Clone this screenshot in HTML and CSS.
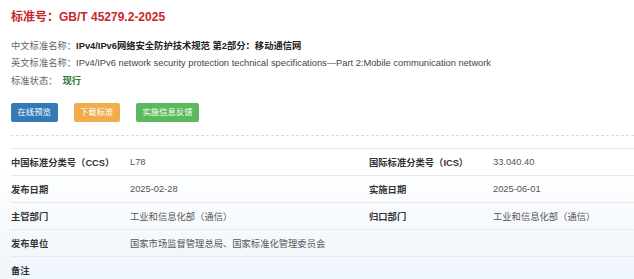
FILE: index.html
```html
<!DOCTYPE html>
<html lang="zh-CN">
<head>
  <meta charset="UTF-8" />
  <title>GB/T 45279.2-2025</title>
  <link rel="stylesheet" href="styles.css">
</head>
<body>

  <div class="detail">
    <h1 class="std-title">标准号：GB/T 45279.2-2025</h1>

    <div class="info">
      <p><span class="info-label">中文标准名称：</span><strong>IPv4/IPv6网络安全防护技术规范 第2部分：移动通信网</strong></p>
      <p><span class="info-label">英文标准名称：</span><span class="en-name">IPv4/IPv6 network security protection technical specifications—Part 2:Mobile communication network</span></p>
      <p class="status-line"><span class="info-label">标准状态：</span><span class="status">现行</span></p>
    </div>

    <div class="actions">
      <button class="btn btn-blue">在线预览</button>
      <button class="btn btn-orange">下载标准</button>
      <button class="btn btn-green">实施信息反馈</button>
    </div>

    <div class="divider"></div>

    <div class="meta">
      <div class="meta-row">
        <div class="meta-key">中国标准分类号（CCS）</div>
        <div class="meta-val">L78</div>
        <div class="meta-key">国际标准分类号（ICS）</div>
        <div class="meta-val">33.040.40</div>
      </div>
      <div class="meta-row">
        <div class="meta-key">发布日期</div>
        <div class="meta-val">2025-02-28</div>
        <div class="meta-key">实施日期</div>
        <div class="meta-val">2025-06-01</div>
      </div>
      <div class="meta-row">
        <div class="meta-key">主管部门</div>
        <div class="meta-val">工业和信息化部（通信）</div>
        <div class="meta-key">归口部门</div>
        <div class="meta-val">工业和信息化部（通信）</div>
      </div>
      <div class="meta-row">
        <div class="meta-key">发布单位</div>
        <div class="meta-val wide">国家市场监督管理总局、国家标准化管理委员会</div>
      </div>
      <div class="meta-row">
        <div class="meta-key">备注</div>
        <div class="meta-val wide"></div>
      </div>
    </div>
  </div>

</body>
</html>
```

FILE: styles.css
```css
html {
  height: 100%;
}

body {
  margin: 0;
  min-height: 100%;
  font-family: "Liberation Sans", "Noto Sans CJK SC", sans-serif;
  font-size: 9.3px;
  color: #555;
  background: linear-gradient(to bottom, #fff 0, #fff 165px, #eef5fb 279px);
}

.detail {
  padding-left: 11px;
  overflow: hidden;
}

.std-title {
  margin: 7px 0 0;
  font-size: 12px;
  line-height: 20px;
  font-weight: bold;
  color: #c9282d;
}

.info {
  margin-top: 11px;
}

.info p {
  margin: 0;
  line-height: 17px;
  white-space: nowrap;
}

.info .status-line {
  margin-top: 1px;
}

.info-label {
  color: #666;
}

.info strong {
  color: #222;
}

.en-name {
  color: #444;
}

.status {
  margin-left: 5px;
  color: #2f7d32;
  font-weight: bold;
}

.actions {
  display: flex;
  gap: 16px;
  margin-top: 13px;
}

.btn {
  height: 19px;
  padding: 0 6.5px;
  border: 0;
  border-radius: 2px;
  color: #fff;
  font-family: inherit;
  font-size: 8.4px;
  line-height: 19px;
}

.btn-blue {
  background: #337ab7;
}

.btn-orange {
  background: #f0ad4e;
}

.btn-green {
  background: #5cb85c;
}

.divider {
  margin-top: 13px;
  border-top: 1px dashed #ddd;
}

.meta {
  margin-top: 12px;
}

.meta-row {
  display: grid;
  grid-template-columns: 119px 239px 124px 1fr;
  height: 26px;
  border-top: 1px solid #e8e8e8;
  align-items: center;
  white-space: nowrap;
}

.meta-key {
  color: #333;
  font-weight: bold;
}

.meta-val {
  color: #555;
}

.meta-val.wide {
  grid-column: span 3;
}
```
